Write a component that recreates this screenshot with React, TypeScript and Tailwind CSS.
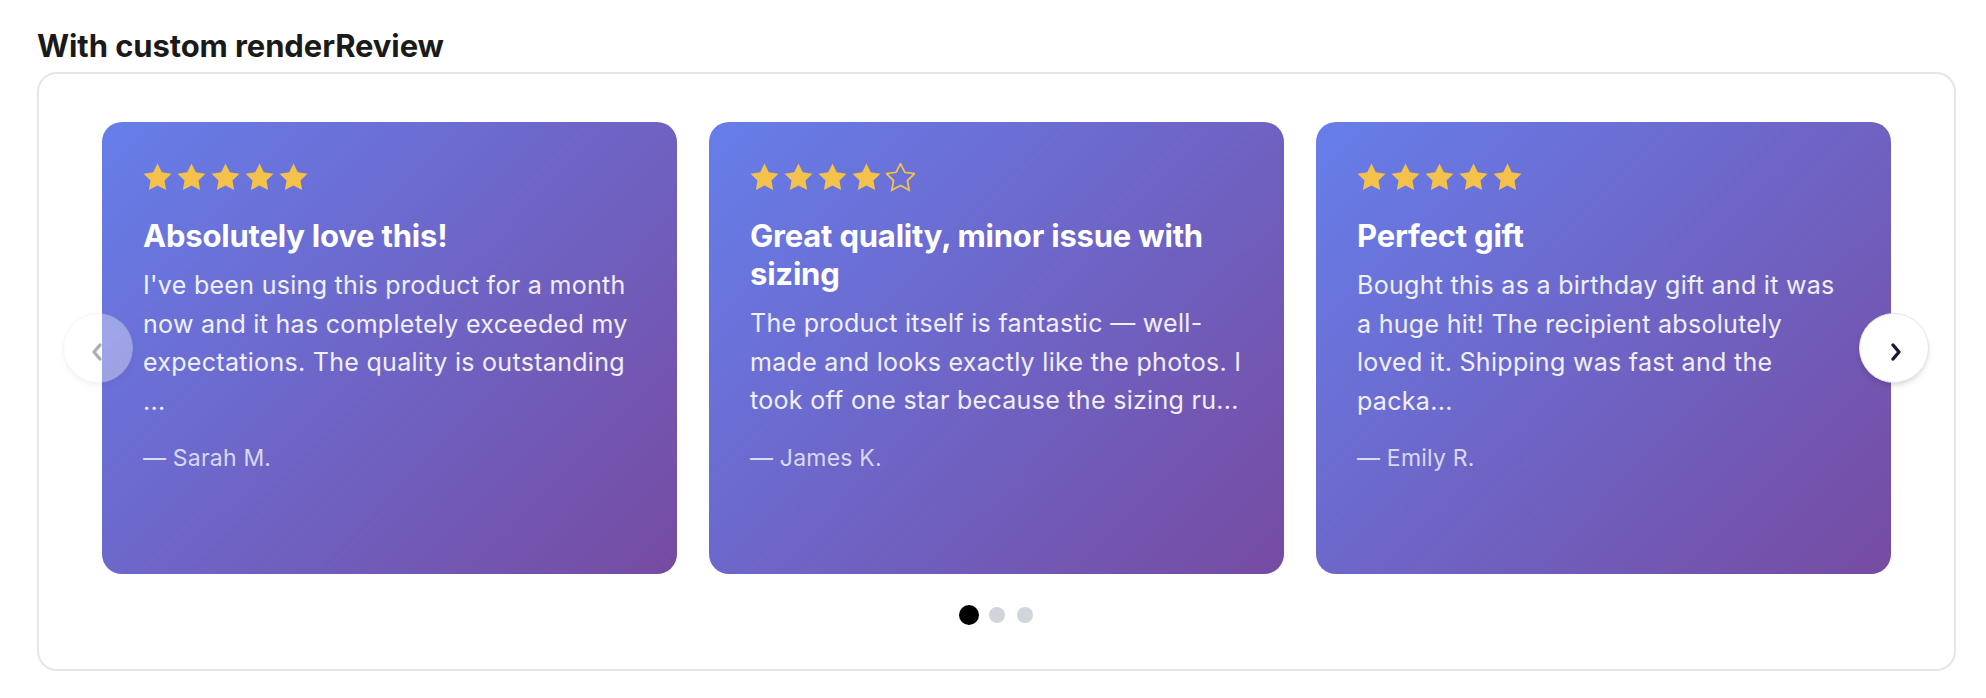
import React from "react";

type Review = {
  rating: number;
  title: string[];
  body: string[];
  author: string;
};

const reviews: Review[] = [
  {
    rating: 5,
    title: ["Absolutely love this!"],
    body: [
      "I've been using this product for a month",
      "now and it has completely exceeded my",
      "expectations. The quality is outstanding",
      "...",
    ],
    author: "Sarah M.",
  },
  {
    rating: 4,
    title: ["Great quality, minor issue with", "sizing"],
    body: [
      "The product itself is fantastic \u2014 well-",
      "made and looks exactly like the photos. I",
      "took off one star because the sizing ru...",
    ],
    author: "James K.",
  },
  {
    rating: 5,
    title: ["Perfect gift"],
    body: [
      "Bought this as a birthday gift and it was",
      "a huge hit! The recipient absolutely",
      "loved it. Shipping was fast and the",
      "packa...",
    ],
    author: "Emily R.",
  },
];

const STAR =
  "M12 2l3.09 6.26L22 9.27l-5 4.87 1.18 6.88L12 17.77l-6.18 3.25L7 14.14 2 9.27l6.91-1.01L12 2z";

function Star({ filled }: { filled: boolean }) {
  return (
    <svg width="29" height="29" viewBox="1.6 1.6 20.8 20.8" className="block">
      <path
        d={STAR}
        fill={filled ? "#f4c14a" : "none"}
        stroke="#f4c14a"
        strokeWidth={filled ? 0 : 1.3}
        strokeLinejoin="miter"
      />
    </svg>
  );
}

function Card({ r }: { r: Review }) {
  return (
    <div className="flex-1 h-[452px] rounded-[20px] bg-[linear-gradient(135deg,#667eea_0%,#764ba2_100%)] px-[41px] pt-[41px] text-white">
      <div className="flex gap-[5px]">
        {[0, 1, 2, 3, 4].map((i) => (
          <Star key={i} filled={i < r.rating} />
        ))}
      </div>
      <h3 className="mt-[25px] text-[31px] leading-[38px] font-bold tracking-[-0.2px]">
        {r.title.map((t, i) => (
          <span key={i} className="block whitespace-nowrap">
            {t}
          </span>
        ))}
      </h3>
      <p className="mt-[11px] text-[25px] leading-[38.5px] tracking-[0.3px] text-white/90">
        {r.body.map((t, i) => (
          <span key={i} className="block whitespace-nowrap">
            {t}
          </span>
        ))}
      </p>
      <p className="mt-[19px] text-[23px] leading-[38.5px] tracking-[0.2px] text-white/75">
        {"\u2014 " + r.author}
      </p>
    </div>
  );
}

export default function App() {
  return (
    <div
      className="w-full h-[698px] bg-white pt-[29px] pl-[37px]"
      style={{ fontFamily: "Inter, 'Noto Sans', sans-serif" }}
    >
      <h2 className="text-[31px] leading-[34px] font-bold text-[#1a1a1a] mb-[9px] tracking-[-0.1px]">
        With custom renderReview
      </h2>
      <div className="w-[1919px] rounded-[20px] border-2 border-[#e5e5ea] pt-[48px] pb-[46px]">
        <div className="relative px-[63px]">
          <div className="flex gap-[32px]">
            {reviews.map((r, i) => (
              <Card key={i} r={r} />
            ))}
          </div>
          <button className="absolute left-[24px] top-1/2 -translate-y-1/2 w-[70px] h-[70px] rounded-full bg-white border border-[#e5e5ea] shadow-md opacity-[0.35] flex items-center justify-center">
            <svg width="14" height="20" viewBox="0 0 14 20" className="mt-[7px] -ml-[3px]">
              <polyline points="10,3 4,10 10,17" fill="none" stroke="#1a1a2e" strokeWidth="3.4" strokeLinecap="round" strokeLinejoin="round" />
            </svg>
          </button>
          <button className="absolute right-[25px] top-1/2 -translate-y-1/2 w-[70px] h-[70px] rounded-full bg-white border border-[#e5e5ea] shadow-md flex items-center justify-center">
            <svg width="14" height="20" viewBox="0 0 14 20" className="mt-[7px] ml-[3px]">
              <polyline points="4,3 10,10 4,17" fill="none" stroke="#1a1a2e" strokeWidth="3.4" strokeLinecap="round" strokeLinejoin="round" />
            </svg>
          </button>
        </div>
        <div className="mt-[33px] flex justify-center items-center gap-[12px]">
          <span className="w-[16px] h-[16px] rounded-full bg-black scale-125" />
          <span className="w-[16px] h-[16px] rounded-full bg-[#d1d5db]" />
          <span className="w-[16px] h-[16px] rounded-full bg-[#d1d5db]" />
        </div>
      </div>
    </div>
  );
}
